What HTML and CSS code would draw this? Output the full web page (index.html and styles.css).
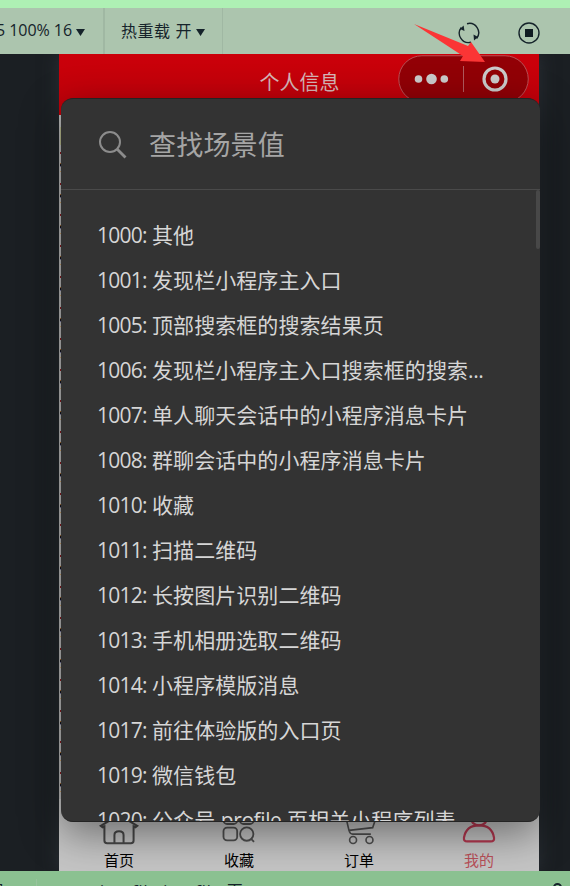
FILE: index.html
```html
<!DOCTYPE html>
<html lang="zh-CN">
<head>
<meta charset="utf-8">
<title>个人信息</title>
<link rel="stylesheet" href="styles.css">
</head>
<body>
<div class="app">
  <div class="strip"></div>
  <header class="toolbar">
    <div class="tool zoom"><span class="num">5 100% 16</span><i class="caret"></i></div>
    <div class="tool reload"><span>热重载</span><span>开</span><i class="caret"></i></div>
    <div class="actions">
      <svg width="22" height="22" viewBox="0 0 22 22" fill="none" stroke="#15232a" stroke-width="1.4"><path d="M9 1.700A9.300 9.300 0 0 1 18.600 16.500M13 20.200A9.300 9.300 0 0 1 3.300 5.500"/><path d="M15.500 12.500l.5 6 4-3.500zM6.500 9L5.600 3.500 2 7z" fill="#15232a" stroke="none"/></svg>
      <svg width="22" height="22" viewBox="0 0 22 22"><circle cx="11" cy="11" r="10" fill="none" stroke="#15232a" stroke-width="1.4"/><path d="M7 7h8v8H7z" fill="#101c22"/></svg>
    </div>
  </header>
  <main class="stage">
    <div class="phone">
      <div class="navbar">
        <h1>个人信息</h1>
        <div class="capsule">
          <svg width="131" height="48" viewBox="0 0 131 48"><rect x=".75" y=".75" width="129.5" height="46.5" rx="23.2" fill="#920006" stroke="#b95055"/><g fill="#cbcbcb"><circle cx="20.5" cy="24" r="3.8"/><circle cx="33.5" cy="24" r="5.3"/><circle cx="46.3" cy="24" r="3.8"/><circle cx="97" cy="24" r="4.5"/></g><path d="M65.5 11v26" stroke="#b05a5d"/><circle cx="97" cy="24" r="11" fill="none" stroke="#cbcbcb" stroke-width="3.200"/></svg>
        </div>
      </div>
      <div class="page"></div>
      <nav class="tabs">
        <div class="tab"><svg width="42" height="34" viewBox="0 0 42 34" fill="none" stroke="#484848" stroke-width="2.200"><path d="M1 13L21 1l20 12-2 1.500-2-1V29q0 3-3 3H8q-3 0-3-3V13.500l-2 1zM16 32V23q0-4 5-4t5 4v9"/></svg><span>首页</span></div>
        <div class="tab"><svg width="42" height="34" viewBox="0 0 42 34" fill="none" stroke="#505050" stroke-width="2"><rect x="4" y="-3" width="15" height="14" rx="4"/><rect x="22" y="-3" width="15" height="14" rx="4"/><rect x="4" y="15" width="15" height="14" rx="4"/><circle cx="29.500" cy="22" r="7.300"/><path d="M34.500 27.500l3 3"/></svg><span>收藏</span></div>
        <div class="tab"><svg width="42" height="34" viewBox="0 0 42 34" fill="none" stroke="#505050" stroke-width="1.800"><path d="M6 1l4 17q1 4 4 4h20M8 6h31l-3 9-26 3"/><circle cx="14.500" cy="28.500" r="3.800"/><circle cx="32.500" cy="28.500" r="3.800"/></svg><span>订单</span></div>
        <div class="tab current"><svg width="42" height="34" viewBox="0 0 42 34" fill="none" stroke="#b53850" stroke-width="2.400"><circle cx="21" cy="3" r="9.500"/><path d="M8 30q-4 0-3.500-4C6 17 12 12.500 21 12.500S36 17 37.500 26q.5 4-3.500 4z"/></svg><span>我的</span></div>
      </nav>
      <section class="picker">
        <div class="search">
          <svg width="30" height="30" viewBox="0 0 30 30" fill="none" stroke="#8c8c8c" stroke-width="2"><circle cx="12" cy="12" r="10"/><path d="M19 19l8.500 8.500" stroke-width="2.800"/></svg>
          <span>查找场景值</span>
        </div>
        <ul class="list">
          <li><b>1000:</b>其他</li>
          <li><b>1001:</b>发现栏小程序主入口</li>
          <li><b>1005:</b>顶部搜索框的搜索结果页</li>
          <li><b>1006:</b>发现栏小程序主入口搜索框的搜索<em>...</em></li>
          <li><b>1007:</b>单人聊天会话中的小程序消息卡片</li>
          <li><b>1008:</b>群聊会话中的小程序消息卡片</li>
          <li><b>1010:</b>收藏</li>
          <li><b>1011:</b>扫描二维码</li>
          <li><b>1012:</b>长按图片识别二维码</li>
          <li><b>1013:</b>手机相册选取二维码</li>
          <li><b>1014:</b>小程序模版消息</li>
          <li><b>1017:</b>前往体验版的入口页</li>
          <li><b>1019:</b>微信钱包</li>
          <li><b>1020:</b>公众号 <em>profile</em> 页相关小程序列表</li>
        </ul>
        <div class="thumb"></div>
      </section>
    </div>
  </main>
  <footer class="status"><span class="status-left">号</span><span class="status-file">ion-file ion-file 页</span><i class="ring"></i></footer>
  <svg class="arrow" width="72" height="40" viewBox="0 0 72 40"><path d="M0 0L54 22l3-4 14 20-25-1 3-5z" fill="#fb3535"/></svg>
</div>
</body>
</html>
```
FILE: styles.css
```css
* { box-sizing: border-box; }
body { margin: 0; font-family: "Open Sans", "Noto Sans CJK SC", sans-serif; }
.app { position: relative; width: 570px; height: 886px; overflow: hidden; display: flex; flex-direction: column; background: #1b1f23; }
.strip { height: 8px; background: #aef0b4; }
.toolbar { height: 46px; display: flex; background: #acc5ae; color: #15232a; }
.tool { display: flex; align-items: center; font-size: 16px; padding-bottom: 2px; }
.zoom { width: 105px; border-right: 2px solid #a0b8a3; }
.num { letter-spacing: -.05px; margin-left: -4px; white-space: nowrap; }
.reload { width: 118px; border-right: 1px solid #a0b8a3; padding-left: 16px; gap: 5px; letter-spacing: .5px; }
.caret { width: 9px; height: 7px; margin: 5px 0 0 4px; background: #15232a; clip-path: polygon(0 0, 100% 0, 50% 100%); }
.reload .caret { margin-left: -1px; }
.actions { flex: 1; display: flex; justify-content: flex-end; align-items: center; gap: 38px; padding: 4px 30px 0 0; }
.actions svg { display: block; }
.stage { height: 817px; padding-left: 59px; background: #1b1f23; overflow: hidden; }
.phone { position: relative; width: 480px; height: 817px; display: flex; flex-direction: column; background: #c5c5c5; box-shadow: 0 0 16px #2b3036; }
.navbar { position: relative; height: 61px; background: linear-gradient(#cb000a, #c0000a); }
h1 { margin: 0; padding: 15px 0 0 1px; text-align: center; font-size: 20px; line-height: 28px; font-weight: 400; color: #d7b7b8; }
.capsule { position: absolute; left: 339px; top: 1px; }
.page { flex: 1; background: linear-gradient(90deg, #b9b9b9 1px, transparent 1px), linear-gradient(#b9b9b9 12px, #b5b78a 12px 30px, transparent 30px), repeating-linear-gradient(#b9b9b9 0 6px, #8c1b20 6px 8px, #b9b9b9 8px 17px, #a06a30 17px 18px, #15151f 18px 20px, #75759a 20px 21px, #b9b9b9 21px 25px, #c9a26a 25px 26px, #b9b9b9 26px 31px); }
.tabs { height: 72px; display: flex; background: #c5c5c5; }
.tab { flex: 1; display: flex; flex-direction: column; align-items: center; padding-top: 15px; font-size: 15px; line-height: 22px; color: #000; }
.tab svg { display: block; margin-bottom: 4px; }
.current { color: #b95059; }
.picker { position: absolute; left: 2px; top: 44px; width: 479px; height: 724px; border: solid #242424; border-width: 1px 0; border-radius: 12px; background: #333; overflow: hidden; box-shadow: 0 12px 42px rgba(0, 0, 0, .45); }
.search { height: 91px; border-bottom: 1px solid #4a4a4a; display: flex; align-items: center; gap: 21px; padding-left: 37px; font-size: 27px; letter-spacing: .2px; color: #a5a5a5; }
.search svg { margin-top: 1px; }
.search span { margin-top: -2px; }
.list { margin: 0; padding: 23px 0 0 36px; list-style: none; }
.list li { height: 45px; display: flex; align-items: center; font-size: 21px; letter-spacing: .07px; line-height: 45px; color: #d6d6d6; white-space: pre; }
.list b { width: 55px; font-weight: 400; letter-spacing: -.75px; }
.list em { font-style: normal; letter-spacing: -.4px; }
.thumb { position: absolute; right: 0; top: 91px; width: 4px; height: 59px; border-radius: 2px; background: #484848; }
.status { height: 15px; display: flex; overflow: hidden; background: #8bc191; color: #15232a; font-size: 16px; line-height: 24px; }
.status-left { width: 37px; margin-top: 8px; border-right: 1px solid #99c39e; text-indent: -11px; }
.status-file { margin: 8px 0 0 63px; white-space: nowrap; letter-spacing: .9px; }
.ring { width: 9px; height: 9px; margin: 12px 8px 0 auto; border: 2px solid #15232a; border-radius: 50%; }
.arrow { position: absolute; left: 414px; top: 24px; }
```
